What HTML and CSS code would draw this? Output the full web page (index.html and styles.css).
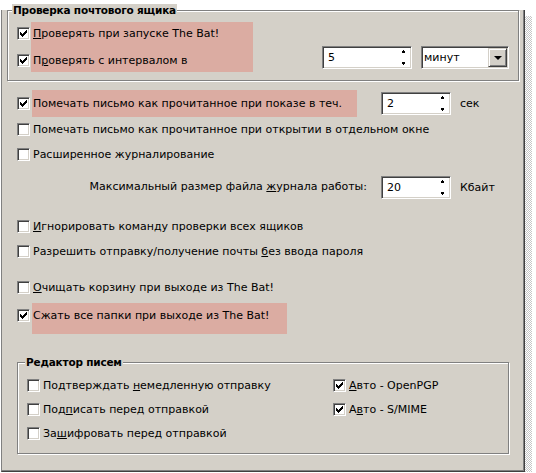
FILE: index.html
```html
<!doctype html>
<html lang="ru">

<head>
    <meta charset="utf-8">
    <title>Проверка почтового ящика</title>
    <link rel="stylesheet" href="styles.css">
</head>

<body>
    <svg class="defs" xmlns="http://www.w3.org/2000/svg">
        <symbol id="tick" viewBox="0 0 11 11">
            <path d="M2 4h1v3H2z M3 5h1v3H3z M4 6h1v3H4z M5 5h1v3H5z M6 4h1v3H6z M7 3h1v3H7z M8 2h1v3H8z" />
        </symbol>
        <symbol id="arrows" viewBox="0 0 5 15">
            <path d="M2 0h1v1H2z M1 1h3v2H1z M1 12h3v2H1z M2 14h1v1H2z" />
        </symbol>
    </svg>

    <div class="frame">
        <!-- mailbox check group -->
        <div class="group group-check">
            <span class="group-title">Проверка почтового ящика</span>
            <div class="row row-startup">
                <span class="cb"><svg class="tick"><use href="#tick" /></svg></span>
                <span class="label mark mark-startup"><u>П</u>роверять при запуске The Bat!</span>
            </div>
            <div class="row row-interval">
                <span class="cb"><svg class="tick"><use href="#tick" /></svg></span>
                <span class="label mark mark-interval">П<u>р</u>оверять с интервалом в</span>
                <span class="spin spin-interval">
                    <span class="spin-value">5</span>
                    <svg class="spin-arrows"><use href="#arrows" /></svg>
                </span>
                <span class="combo">
                    <span class="combo-value">минут</span>
                    <span class="combo-btn"><span class="combo-arrow"></span></span>
                </span>
            </div>
        </div>

        <!-- reading options -->
        <div class="row row-view">
            <span class="cb"><svg class="tick"><use href="#tick" /></svg></span>
            <span class="label mark mark-view">Помечать письмо как прочитанное при показе в теч.</span>
            <span class="spin spin-small">
                <span class="spin-value">2</span>
                <svg class="spin-arrows"><use href="#arrows" /></svg>
            </span>
            <span class="unit">сек</span>
        </div>
        <div class="row row-plain">
            <span class="cb"></span>
            <span class="label">Помечать письмо как прочитанное при открытии в отдельном окне</span>
        </div>
        <div class="row row-plain">
            <span class="cb"></span>
            <span class="label">Расширенное журналирование</span>
        </div>
        <div class="row row-log">
            <span class="log-label">Максимальный размер файла <u>ж</u>урнала работы:</span>
            <span class="spin spin-small">
                <span class="spin-value">20</span>
                <svg class="spin-arrows"><use href="#arrows" /></svg>
            </span>
            <span class="unit">Кбайт</span>
        </div>

        <div class="row row-plain row-ignore">
            <span class="cb"></span>
            <span class="label"><u>И</u>гнорировать команду проверки всех ящиков</span>
        </div>
        <div class="row row-plain">
            <span class="cb"></span>
            <span class="label">Разрешить отправку/получение почты <u>б</u>ез ввода пароля</span>
        </div>

        <div class="row row-plain row-trash">
            <span class="cb"></span>
            <span class="label"><u>О</u>чищать корзину при выходе из The Bat!</span>
        </div>
        <div class="row row-compact">
            <span class="cb"><svg class="tick"><use href="#tick" /></svg></span>
            <span class="label mark mark-compact">Сжать все папки при выходе из The Bat!</span>
        </div>

        <!-- editor group -->
        <div class="group group-editor">
            <span class="group-title">Редактор писем</span>
            <div class="editor-cols">
                <div class="col-left">
                    <div class="row row-editor">
                        <span class="cb"></span>
                        <span class="label">Подтверждать <u>н</u>емедленную отправку</span>
                    </div>
                    <div class="row row-editor">
                        <span class="cb"></span>
                        <span class="label">Под<u>п</u>исать перед отправкой</span>
                    </div>
                    <div class="row row-editor">
                        <span class="cb"></span>
                        <span class="label">За<u>ш</u>ифровать перед отправкой</span>
                    </div>
                </div>
                <div class="col-right">
                    <div class="row row-editor">
                        <span class="cb"><svg class="tick"><use href="#tick" /></svg></span>
                        <span class="label"><u>А</u>вто - OpenPGP</span>
                    </div>
                    <div class="row row-editor">
                        <span class="cb"><svg class="tick"><use href="#tick" /></svg></span>
                        <span class="label">А<u>в</u>то - S/MIME</span>
                    </div>
                </div>
            </div>
        </div>
    </div>
</body>

</html>
```

FILE: styles.css
```css
/* base */

body {
    margin: 0;
    background: #fff;
    font-family: "DejaVu Sans", sans-serif;
    font-size: 11px;
    line-height: 13px;
    color: #000;
}

.defs {
    display: none;
}

u {
    text-decoration-thickness: 1px;
    text-underline-offset: 1px;
}

/* dialog page with dithered shadow */
.frame {
    position: relative;
    margin-left: 1px;
    width: 522px;
    height: 461px;
    background: #d4d0c8;
    border-left: 1px solid #808080;
    border-right: 1px solid #404040;
    border-bottom: 1px solid #404040;
    box-shadow: inset -1px -1px #808080;
}

.frame::before {
    content: "";
    position: absolute;
    left: 5px;
    top: 6px;
    right: -8px;
    bottom: -8px;
    z-index: -1;
    background: repeating-conic-gradient(#c6c6c6 0 25%, #fff 0 50%) 0 0 / 2px 2px;
}

/* etched group boxes */
.group {
    border: 1px solid #808080;
    box-shadow: inset 1px 1px #fff, 1px 1px #fff;
}

.group-title {
    display: block;
    width: fit-content;
    margin-top: -7px;
    padding: 0 1px;
    background: #d4d0c8;
    font-size: 10.5px;
    font-weight: bold;
    letter-spacing: -0.2px;
}

.group-check {
    margin: 10px 0 0 5px;
    width: 510px;
    padding-bottom: 8px;
}

.group-check .group-title {
    margin-left: 4px;
}

.group-editor {
    margin: 28px 0 0 15px;
    width: 490px;
    padding-bottom: 8px;
}

.group-editor .group-title {
    margin-left: 7px;
}

/* rows */
.row {
    display: flex;
    align-items: center;
    white-space: nowrap;
}

.label {
    margin-left: 1px;
    padding-left: 2px;
}

.mark {
    box-sizing: border-box;
    display: flex;
    align-items: center;
    background: #dbaca2;
}

.row-startup {
    margin-top: 5px;
    padding-left: 9px;
    height: 25px;
}

.row-startup .cb {
    margin-bottom: 3px;
}

.mark-startup {
    width: 222px;
    height: 25px;
    padding-bottom: 3px;
}

.row-interval {
    padding-left: 9px;
    height: 25px;
}

.row-interval .cb {
    margin-top: 1px;
}

.mark-interval {
    width: 222px;
    height: 25px;
    padding-top: 1px;
}

.spin-interval {
    width: 90px;
    margin: 0 0 4px 69px;
}

.row-view {
    margin-top: 9px;
    padding-left: 15px;
    height: 27px;
}

.mark-view {
    width: 325px;
    height: 27px;
    margin-left: 2px;
    padding-left: 1px;
}

.row-view .spin {
    margin-left: 24px;
}

.row-plain {
    padding-left: 15px;
    height: 25px;
}

.row-log {
    margin-top: 8px;
    height: 24px;
}

.log-label {
    width: 365px;
    text-align: right;
    margin-bottom: 1px;
}

.row-log .spin {
    margin-left: 14px;
}

.unit {
    margin-left: 9px;
}

.row-ignore {
    margin-top: 15px;
}

.row-trash {
    margin-top: 11px;
}

.row-compact {
    margin-top: 3px;
    padding-left: 15px;
    height: 31px;
}

.row-compact .cb {
    margin-bottom: 6px;
}

.mark-compact {
    width: 255px;
    height: 31px;
    margin-left: 2px;
    padding: 0 0 6px 1px;
}

.editor-cols {
    display: flex;
    margin-top: 4px;
    padding-left: 9px;
}

.col-left {
    width: 306px;
}

.row-editor {
    height: 24px;
}

/* classic sunken checkbox */
.cb {
    flex: none;
    width: 11px;
    height: 11px;
    background: #fff;
    border-top: 1px solid #808080;
    border-left: 1px solid #808080;
    border-bottom: 1px solid #fff;
    border-right: 1px solid #fff;
    box-shadow: inset 1px 1px #404040, inset -1px -1px #d4d0c8;
}

.tick {
    display: block;
    width: 11px;
    height: 11px;
    fill: #000;
    shape-rendering: crispEdges;
}

/* spin edit */
.spin {
    flex: none;
    box-sizing: border-box;
    display: flex;
    align-items: center;
    height: 23px;
    padding: 0 5px 0 5px;
    background: #fff;
    border-top: 1px solid #808080;
    border-left: 1px solid #808080;
    border-bottom: 1px solid #fff;
    border-right: 1px solid #fff;
    box-shadow: inset 1px 1px #404040, inset -1px -1px #d4d0c8;
}

.spin-small {
    width: 70px;
}

.spin-value {
    flex: 1;
}

.spin-arrows {
    width: 5px;
    height: 15px;
    fill: #000;
    shape-rendering: crispEdges;
}

/* combo box */
.combo {
    flex: none;
    box-sizing: border-box;
    display: flex;
    align-items: center;
    width: 88px;
    height: 23px;
    margin: 0 0 4px 9px;
    padding: 0 0 0 2px;
    background: #fff;
    border-top: 1px solid #808080;
    border-left: 1px solid #808080;
    border-bottom: 1px solid #fff;
    border-right: 1px solid #fff;
    box-shadow: inset 1px 1px #404040, inset -1px -1px #d4d0c8;
}

.combo-value {
    flex: 1;
}

.combo-btn {
    box-sizing: border-box;
    display: flex;
    align-items: center;
    justify-content: center;
    width: 19px;
    height: 19px;
    margin-right: 1px;
    background: #d4d0c8;
    border-top: 1px solid #d4d0c8;
    border-left: 1px solid #d4d0c8;
    border-bottom: 1px solid #404040;
    border-right: 1px solid #404040;
    box-shadow: inset 1px 1px #fff, inset -1px -1px #808080;
}

.combo-arrow {
    width: 0;
    height: 0;
    border-left: 4px solid transparent;
    border-right: 4px solid transparent;
    border-top: 4px solid #000;
}
```
